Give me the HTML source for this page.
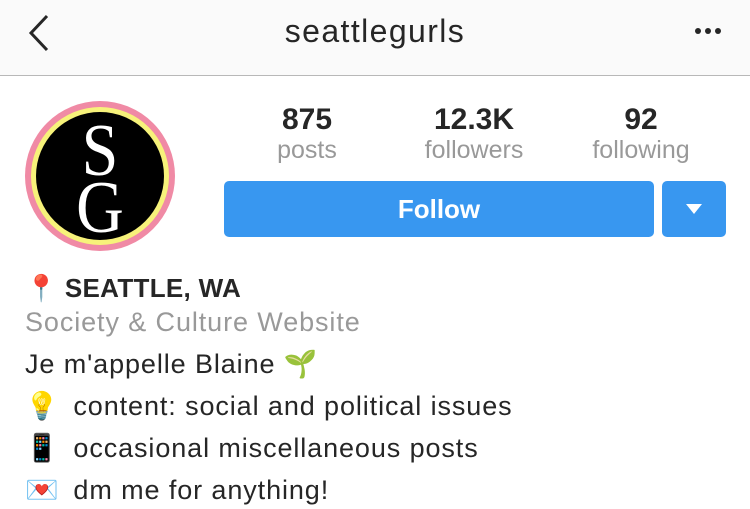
<!DOCTYPE html>
<html><head><meta charset="utf-8"><style>
*{margin:0;padding:0;box-sizing:border-box}
body{width:750px;height:509px;background:#fff;font-family:"Liberation Sans",sans-serif;color:#262626;position:relative;overflow:hidden}
.hdr{position:absolute;left:0;top:0;width:750px;height:76px;background:#fafafa;border-bottom:1px solid #b8b8b8}
.title{position:absolute;left:0;width:750px;top:13px;text-align:center;font-size:32px;letter-spacing:1.4px;color:#262626}
.abs{position:absolute}
.stat{position:absolute;width:160px;text-align:center}
.num{font-size:30px;font-weight:bold;line-height:34px;top:103px}
.lbl{font-size:25px;color:#999;line-height:28px;top:136px}
.btn{position:absolute;top:181px;height:56px;background:#3897f0;border-radius:5px;color:#fff}
.line{position:absolute;left:25px;font-size:27px;letter-spacing:0.9px;line-height:30px;white-space:nowrap}
.emo{display:inline-block;width:40px;letter-spacing:0}
</style></head><body>
<div class="hdr">
<svg class="abs" style="left:26px;top:14px" width="26" height="38" viewBox="0 0 26 38"><path d="M21 2 L5 19 L21 36" fill="none" stroke="#262626" stroke-width="3"/></svg>
<div class="title">seattlegurls</div>
<svg class="abs" style="left:694px;top:27px" width="28" height="8"><circle cx="4" cy="4" r="3" fill="#262626"/><circle cx="14" cy="4" r="3" fill="#262626"/><circle cx="24" cy="4" r="3" fill="#262626"/></svg>
</div>
<svg class="abs" style="left:24px;top:100px" width="152" height="152" viewBox="0 0 152 152">
<circle cx="76" cy="76" r="75" fill="#f08aa5"/><circle cx="76" cy="76" r="69" fill="#f7f27a"/><circle cx="76" cy="76" r="64" fill="#000"/>
<text transform="translate(76,75) scale(1,1.12)" text-anchor="middle" font-family="Liberation Serif" font-size="66" fill="#fff">S</text>
<text transform="translate(76,132) scale(1,1.12)" text-anchor="middle" font-family="Liberation Serif" font-size="66" fill="#fff">G</text>
</svg>
<div class="stat num" style="left:227px">875</div><div class="stat lbl" style="left:227px">posts</div>
<div class="stat num" style="left:394px">12.3K</div><div class="stat lbl" style="left:394px">followers</div>
<div class="stat num" style="left:561px">92</div><div class="stat lbl" style="left:561px">following</div>
<div class="btn" style="left:224px;width:430px;text-align:center;font-size:26px;font-weight:bold;line-height:56px">Follow</div>
<div class="btn" style="left:662px;width:64px"><svg class="abs" style="left:24px;top:23px" width="16" height="10"><path d="M0 0 H16 L8 10Z" fill="#fff"/></svg></div>
<div class="line" style="top:273px;font-weight:bold;font-size:26px;letter-spacing:0.3px"><span style="color:#d22;letter-spacing:0">📍</span> SEATTLE, WA</div>
<div class="line" style="top:307px;color:#999">Society &amp; Culture Website</div>
<div class="line" style="top:349px">Je m'appelle Blaine <span style="color:#4a4">🌱</span></div>
<div class="line" style="top:391px"><span class="emo">💡</span>&nbsp;content: social and political issues</div>
<div class="line" style="top:433px"><span class="emo">📱</span>&nbsp;occasional miscellaneous posts</div>
<div class="line" style="top:475px"><span class="emo">💌</span>&nbsp;dm me for anything!</div>
</body></html>
